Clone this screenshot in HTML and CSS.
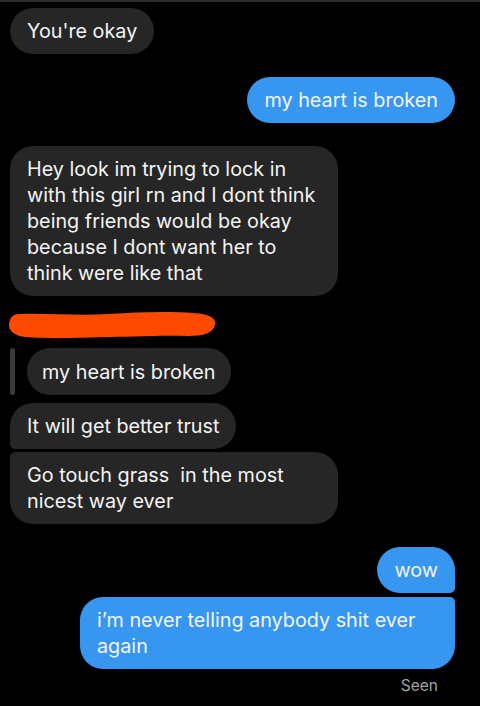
FILE: index.html
```html
<!DOCTYPE html>
<html lang="en">
<head>
    <meta charset="UTF-8">
    <title>Chat</title>
    <link rel="stylesheet" href="styles.css">
</head>
<body>

<div class="chat">

    <div class="msg in first">You're okay</div>

    <div class="msg out gap-lg">my heart is broken</div>

    <div class="msg in wide gap-lg">Hey look im trying to lock in with this girl rn and I dont think being friends would be okay because I dont want her to think were like that</div>

    <!-- scribbled-out name -->
    <svg class="scribble" width="210" height="28" viewBox="0 0 210 28">
        <path d="M12 3 C40 2 70 5 100 3 C130 1 160 0 186 2 C201 3 209 7 207 14 C205 22 196 25 180 25 C150 24 120 26 95 26 C70 27 40 28 18 26 C6 25 0 19 1 13 C2 6 5 3 12 3 Z" fill="#fd4a00"/>
    </svg>

    <div class="reply">
        <span class="reply-bar"></span>
        <div class="msg in quoted">my heart is broken</div>
    </div>

    <div class="msg in top-of-group">It will get better trust</div>
    <div class="msg in wide bottom-of-group">Go touch grass&nbsp; in the most nicest way ever</div>

    <div class="msg out top-out gap-lg">wow</div>
    <div class="msg out wide-out bottom-out">i’m never telling anybody shit ever again</div>

    <div class="seen">Seen</div>

</div>

</body>
</html>
```

FILE: styles.css
```css
*{
    margin: 0;
    padding: 0;
    box-sizing: border-box;
}

html, body{
    background: #000;
}

body{
    width: 480px;
    height: 706px;
    overflow: hidden;
    border-top: 2px solid #2c2c2c;
    font-family: "Inter", "Liberation Sans", sans-serif;
    -webkit-font-smoothing: antialiased;
}

.chat{
    display: flex;
    flex-direction: column;
    padding: 6px 25px 0 10px;
}

.msg{
    width: fit-content;
    max-width: 328px;
    padding: 10px 17px;
    border-radius: 23px;
    font-size: 19.8px;
    line-height: 26px;
    color: #f4f4f4;
}

.msg.in{
    background: #262626;
    align-self: flex-start;
}

.msg.out{
    background: #3797f0;
    align-self: flex-end;
}

.wide{
    width: 328px;
}

.wide-out{
    width: 375px;
    max-width: 375px;
}

.gap-lg{
    margin-top: 23px;
}

.scribble{
    display: block;
    margin: 15px 0 0 -2px;
}

.reply{
    display: flex;
    align-items: stretch;
    gap: 12px;
    margin-top: 9px;
}

.reply-bar{
    width: 5px;
    border-radius: 3px;
    background: #3a3a3a;
}

.msg.quoted{
    padding: 11px 15px 10px;
}

.top-of-group{
    margin-top: 8px;
    border-bottom-left-radius: 5px;
}

.bottom-of-group{
    margin-top: 3px;
    border-top-left-radius: 5px;
}

.top-out{
    border-bottom-right-radius: 5px;
}

.bottom-out{
    margin-top: 4px;
    border-top-right-radius: 5px;
}

.seen{
    align-self: flex-end;
    margin: 7px 17px 0 0;
    font-size: 15.5px;
    color: #a3a3a3;
}
```
